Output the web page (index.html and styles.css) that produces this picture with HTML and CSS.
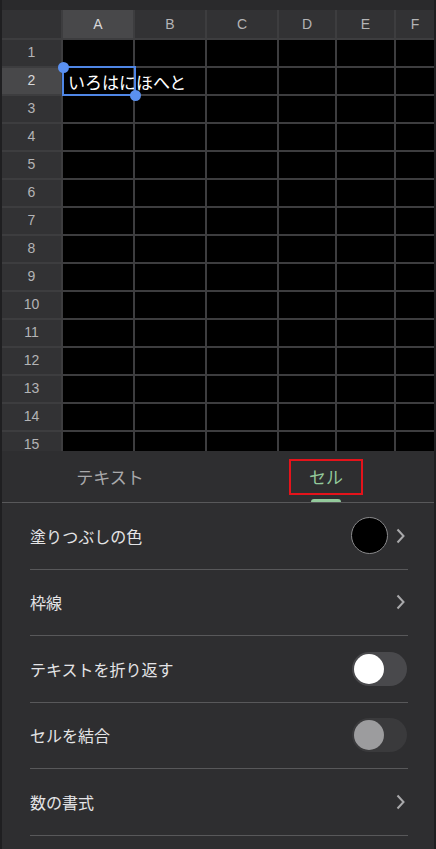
FILE: index.html
```html
<!DOCTYPE html>
<html lang="ja">
<head>
    <meta charset="UTF-8">
    <meta name="viewport" content="width=device-width, initial-scale=1.0">
    <title>スプレッドシート - セルの書式</title>
    <link rel="stylesheet" href="styles.css">
</head>
<body>

    <!-- Sheet -->
    <div class="sheet">
        <div class="topbar"></div>
        <div class="grid">
            <div class="corner"></div>
            <div class="col-head active">A</div>
            <div class="col-head">B</div>
            <div class="col-head">C</div>
            <div class="col-head">D</div>
            <div class="col-head">E</div>
            <div class="col-head">F</div>

            <div class="row-head">1</div>
            <div class="cell"></div><div class="cell"></div><div class="cell"></div><div class="cell"></div><div class="cell"></div><div class="cell"></div>

            <div class="row-head active">2</div>
            <div class="cell cell-text"><span>いろはにほへと</span></div><div class="cell"></div><div class="cell"></div><div class="cell"></div><div class="cell"></div><div class="cell"></div>

            <div class="row-head">3</div>
            <div class="cell"></div><div class="cell"></div><div class="cell"></div><div class="cell"></div><div class="cell"></div><div class="cell"></div>
            <div class="row-head">4</div>
            <div class="cell"></div><div class="cell"></div><div class="cell"></div><div class="cell"></div><div class="cell"></div><div class="cell"></div>
            <div class="row-head">5</div>
            <div class="cell"></div><div class="cell"></div><div class="cell"></div><div class="cell"></div><div class="cell"></div><div class="cell"></div>
            <div class="row-head">6</div>
            <div class="cell"></div><div class="cell"></div><div class="cell"></div><div class="cell"></div><div class="cell"></div><div class="cell"></div>
            <div class="row-head">7</div>
            <div class="cell"></div><div class="cell"></div><div class="cell"></div><div class="cell"></div><div class="cell"></div><div class="cell"></div>
            <div class="row-head">8</div>
            <div class="cell"></div><div class="cell"></div><div class="cell"></div><div class="cell"></div><div class="cell"></div><div class="cell"></div>
            <div class="row-head">9</div>
            <div class="cell"></div><div class="cell"></div><div class="cell"></div><div class="cell"></div><div class="cell"></div><div class="cell"></div>
            <div class="row-head">10</div>
            <div class="cell"></div><div class="cell"></div><div class="cell"></div><div class="cell"></div><div class="cell"></div><div class="cell"></div>
            <div class="row-head">11</div>
            <div class="cell"></div><div class="cell"></div><div class="cell"></div><div class="cell"></div><div class="cell"></div><div class="cell"></div>
            <div class="row-head">12</div>
            <div class="cell"></div><div class="cell"></div><div class="cell"></div><div class="cell"></div><div class="cell"></div><div class="cell"></div>
            <div class="row-head">13</div>
            <div class="cell"></div><div class="cell"></div><div class="cell"></div><div class="cell"></div><div class="cell"></div><div class="cell"></div>
            <div class="row-head">14</div>
            <div class="cell"></div><div class="cell"></div><div class="cell"></div><div class="cell"></div><div class="cell"></div><div class="cell"></div>
            <div class="row-head">15</div>
            <div class="cell"></div><div class="cell"></div><div class="cell"></div><div class="cell"></div><div class="cell"></div><div class="cell"></div>
        </div>

        <!-- Selected cell A2 -->
        <div class="selection">
            <span class="handle handle-start"></span>
            <span class="handle handle-end"></span>
        </div>
    </div>

    <!-- Format panel -->
    <div class="panel">
        <div class="tabs">
            <div class="tab">テキスト</div>
            <div class="tab selected"><span class="tab-label">セル</span><span class="indicator"></span></div>
        </div>

        <div class="options">
            <div class="option">
                <span>塗りつぶしの色</span>
                <div class="option-right">
                    <span class="swatch"></span>
                    <svg class="chevron" width="9" height="16" viewBox="0 0 9 16"><polyline points="1.5,1.5 7.5,8 1.5,14.5"/></svg>
                </div>
            </div>
            <div class="option">
                <span>枠線</span>
                <div class="option-right">
                    <svg class="chevron" width="9" height="16" viewBox="0 0 9 16"><polyline points="1.5,1.5 7.5,8 1.5,14.5"/></svg>
                </div>
            </div>
            <div class="option">
                <span>テキストを折り返す</span>
                <span class="toggle"><span class="knob"></span></span>
            </div>
            <div class="option">
                <span>セルを結合</span>
                <span class="toggle disabled"><span class="knob"></span></span>
            </div>
            <div class="option">
                <span>数の書式</span>
                <div class="option-right">
                    <svg class="chevron" width="9" height="16" viewBox="0 0 9 16"><polyline points="1.5,1.5 7.5,8 1.5,14.5"/></svg>
                </div>
            </div>
        </div>
    </div>

</body>
</html>
```

FILE: styles.css
```css
/* Reset and global styling */
* {
    margin: 0;
    padding: 0;
    box-sizing: border-box;
}
body {
    font-family: "Noto Sans CJK JP", "Liberation Sans", sans-serif;
    background-color: #2e2e30;
    color: #e6e6e6;
    width: 436px;
    height: 849px;
    overflow: hidden;
    border-left: 2px solid #1f1f21;
    border-right: 2px solid #1f1f21;
}

/* Sheet area */
.sheet {
    position: relative;
    height: 451px;
    overflow: hidden;
}
.topbar {
    height: 10px;
    background-color: #2a2a2c;
}
.grid {
    display: grid;
    grid-template-columns: 59px 70px 70px 70px 56px 57px 1fr;
    grid-template-rows: 28px;
    grid-auto-rows: 26px;
    gap: 2px;
    background-color: #3d3d3f;
}
.corner,
.col-head,
.row-head {
    background-color: #323234;
    color: #b4b4b6;
    font-family: "Liberation Sans", sans-serif;
    font-size: 14px;
    display: flex;
    align-items: center;
    justify-content: center;
}
.row-head {
    padding-bottom: 2px;
}
.col-head.active,
.row-head.active {
    background-color: #48484a;
    color: #d8d8da;
}
.cell {
    background-color: #000;
}
.cell-text {
    position: relative;
    z-index: 1;
    display: flex;
    align-items: center;
    padding-left: 5px;
    white-space: nowrap;
    color: #fff;
    font-size: 17px;
}

/* Selection box */
.selection {
    position: absolute;
    left: 60px;
    top: 66px;
    width: 74px;
    height: 30px;
    border: 2px solid #4f86e6;
    z-index: 2;
}
.handle {
    position: absolute;
    width: 11px;
    height: 11px;
    border-radius: 50%;
    background-color: #5a90f0;
}
.handle-start {
    left: -6.5px;
    top: -6.5px;
}
.handle-end {
    right: -6.5px;
    bottom: -6.5px;
}

/* Tabs */
.tabs {
    display: flex;
    height: 52px;
    border-bottom: 1.5px solid #58585a;
}
.tab {
    flex: 1;
    display: flex;
    align-items: center;
    justify-content: center;
    font-size: 17px;
    color: #a9a9ab;
    position: relative;
}
.tab.selected {
    color: #93c99b;
}
.tab-label {
    border: 2px solid #e4131b;
    padding: 3px 18px 4px;
    line-height: 25px;
}
.indicator {
    position: absolute;
    bottom: 0;
    left: 93px;
    width: 30px;
    height: 3px;
    border-radius: 3px 3px 0 0;
    background-color: #93c99b;
}

/* Option list */
.options {
    padding: 0 26px 0 28px;
}
.option {
    height: 66.5px;
    display: flex;
    align-items: center;
    justify-content: space-between;
    border-bottom: 1px solid #58585a;
    font-size: 16px;
    color: #e4e4e6;
}
.option-right {
    display: flex;
    align-items: center;
    gap: 8px;
    padding-right: 3px;
}
.swatch {
    width: 37px;
    height: 37px;
    border-radius: 50%;
    background-color: #000;
    border: 1px solid #8a8a8c;
}
.chevron {
    fill: none;
    stroke: #a9a9ab;
    stroke-width: 2;
}

/* Toggle switches */
.toggle {
    width: 55px;
    height: 34px;
    border-radius: 17px;
    background-color: #49494c;
    display: flex;
    align-items: center;
    padding-left: 2px;
    margin-right: 1px;
}
.knob {
    width: 30px;
    height: 30px;
    border-radius: 50%;
    background-color: #fff;
}
.toggle.disabled {
    background-color: #3a3a3c;
}
.toggle.disabled .knob {
    background-color: #9c9c9e;
}
```
